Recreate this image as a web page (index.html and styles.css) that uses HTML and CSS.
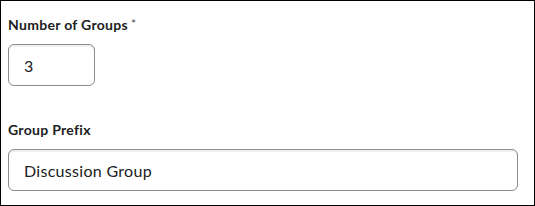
FILE: index.html
```html
<!DOCTYPE html>
<html lang="en">
<head>
    <meta charset="UTF-8">
    <meta name="viewport" content="width=device-width, initial-scale=1.0">
    <title>Group Settings</title>
    <link rel="stylesheet" href="styles.css">
</head>
<body>
    <div class="panel">
        <div class="field">
            <label class="field-label required" for="num-groups">Number of Groups</label>
            <input class="text-input number-input" id="num-groups" type="text" value="3">
        </div>
        <div class="field">
            <label class="field-label" for="group-prefix">Group Prefix</label>
            <input class="text-input prefix-input" id="group-prefix" type="text" value="Discussion Group">
        </div>
    </div>
</body>
</html>
```

FILE: styles.css
```css
body {
    margin: 0;
    padding: 0;
    background: #ffffff;
    font-family: Lato, "Noto Sans", sans-serif;
}

.panel {
    box-sizing: border-box;
    width: 535px;
    height: 206px;
    border: 1px solid #000000;
    padding: 14px 17px 14px 7px;
    display: flex;
    flex-direction: column;
    gap: 34px;
}

.field {
    display: flex;
    flex-direction: column;
    align-items: flex-start;
}

.field-label {
    font-size: 14px;
    font-weight: 700;
    line-height: 20px;
    letter-spacing: 0.3px;
    color: #202122;
    margin-bottom: 9px;
}

/* small raised asterisk after required labels */
.required::after {
    content: "*";
    display: inline-block;
    margin-left: 3px;
    font-size: 12px;
    font-weight: 400;
    line-height: 1;
    vertical-align: 2px;
    color: #494c4e;
}

.text-input {
    box-sizing: border-box;
    height: 42px;
    margin: 0;
    padding: 8px 15px;
    border: 1px solid #868c8f;
    border-radius: 6px;
    box-shadow: inset 0 2px 0 0 rgba(177, 185, 190, 0.2);
    font-family: Lato, "Noto Sans", sans-serif;
    font-size: 16px;
    letter-spacing: 0.3px;
    color: #202122;
    background: #ffffff;
    outline: none;
}

.number-input {
    width: 87px;
}

.prefix-input {
    width: 510px;
}
```
